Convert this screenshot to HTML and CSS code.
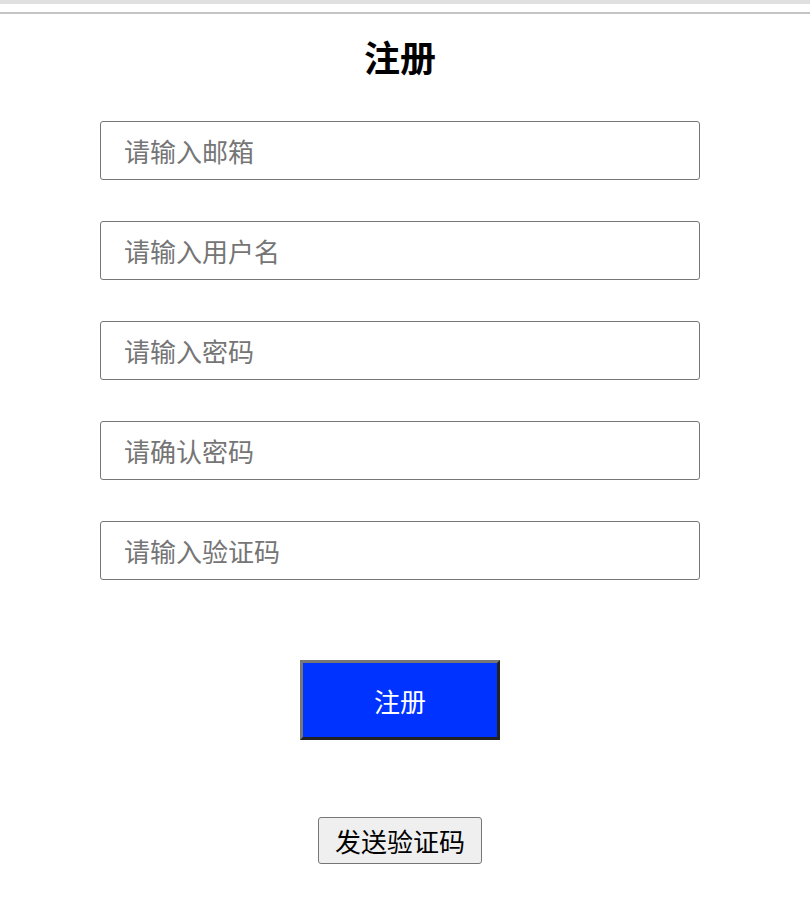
FILE: index.html
```html
<!DOCTYPE html>
<html lang="zh">
<head>
<meta charset="utf-8">
<link rel="stylesheet" href="styles.css">
</head>
<body>
<div class="topband"></div>
<div class="rule"></div>
<main class="page">
  <h1 class="title">注册</h1>
  <form class="form">
    <input class="field" type="text" placeholder="请输入邮箱">
    <input class="field" type="text" placeholder="请输入用户名">
    <input class="field" type="password" placeholder="请输入密码">
    <input class="field" type="password" placeholder="请确认密码">
    <input class="field" type="text" placeholder="请输入验证码">
    <button class="submit" type="button">注册</button>
    <button class="send" type="button">发送验证码</button>
  </form>
</main>
</body>
</html>
```
FILE: styles.css
```css
html, body {
  margin: 0;
  padding: 0;
  background: #ffffff;
  font-family: "Noto Sans CJK SC", "Noto Sans", sans-serif;
}
.topband {
  height: 4px;
  background: #e0e0e0;
}
.rule {
  height: 2px;
  margin-top: 8px;
  background: #c4c4c4;
}
.page {
  display: flex;
  flex-direction: column;
  align-items: center;
  padding-right: 10px;
}
.title {
  margin: 20px 0 0;
  height: 44px;
  line-height: 44px;
  font-size: 36px;
  font-weight: bold;
  color: #000;
}
.form {
  display: flex;
  flex-direction: column;
  align-items: center;
  margin-top: 43px;
}
.field {
  box-sizing: border-box;
  width: 600px;
  height: 59px;
  margin: 0 0 41px;
  padding: 0 23px;
  border: 1px solid #767676;
  border-radius: 3px;
  font-family: "Noto Sans CJK SC", sans-serif;
  font-size: 26px;
  color: #000;
  background: #fff;
  outline: none;
}
.field::placeholder {
  color: #757575;
}
.field:last-of-type {
  margin-bottom: 80px;
}
.submit {
  box-sizing: border-box;
  width: 200px;
  height: 80px;
  margin: 0;
  border-style: solid;
  border-width: 3px;
  border-color: #777777 #222222 #222222 #777777;
  background: #0033ff;
  color: #fff;
  font-family: "Noto Sans CJK SC", sans-serif;
  font-size: 26px;
  padding: 0;
}
.send {
  box-sizing: border-box;
  margin-top: 77px;
  height: 47px;
  padding: 0 16px;
  border: 1px solid #767676;
  border-radius: 3px;
  background: #efefef;
  color: #000;
  font-family: "Noto Sans CJK SC", sans-serif;
  font-size: 26px;
}
```
